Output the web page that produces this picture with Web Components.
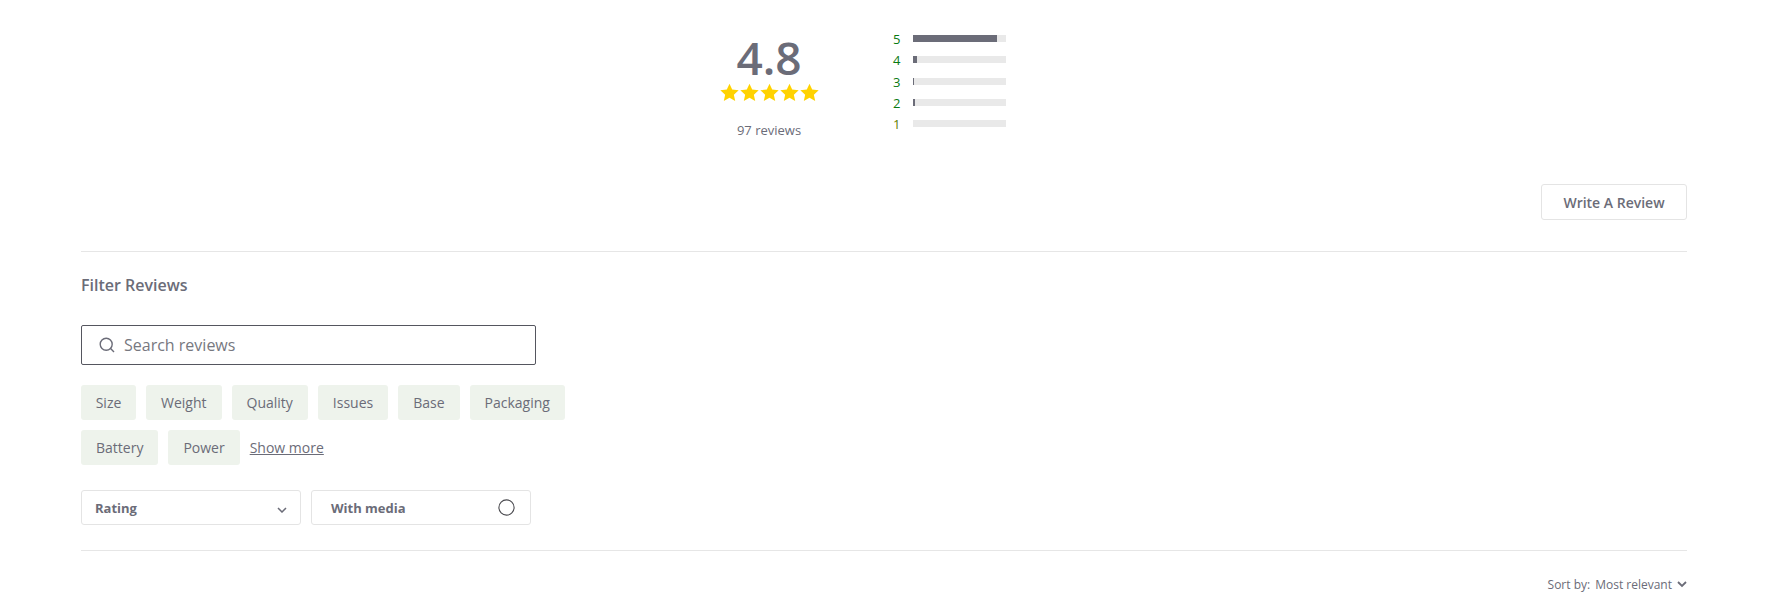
<!DOCTYPE html>
<html>
<head>
<meta charset="utf-8">
<style>
html, body { margin: 0; background: #fff; }
body { font-family: "Open Sans", sans-serif; color: #6b6c78; }
</style>
</head>
<body>
<review-panel></review-panel>

<template id="star-row-tpl">
  <style>
    :host { display: flex; gap: 1px; }
    svg { width: 19px; height: 19px; display: block; fill: #ffd200; }
  </style>
</template>

<template id="rating-bar-tpl">
  <style>
    :host { display: flex; align-items: center; height: 21.25px; font-size: 13px; font-weight: 500; }
    .n { width: 20px; color: #0a7a12; line-height: 1; position: relative; top: 1px; }
    :host([stars="1"]) .n { color: #5f7f00; }
    .track { width: 93px; height: 7px; background: #e9e9e9; }
    .fill { height: 100%; background: #6b6c78; }
  </style>
  <span class="n"></span>
  <div class="track"><div class="fill"></div></div>
</template>

<template id="chip-tpl">
  <style>
    :host { display: inline-flex; align-items: center; height: 35px; padding: 0 15px; background: #eef3ec; border-radius: 3px; font-size: 14px; color: #6b6c78; }
  </style>
  <slot></slot>
</template>

<template id="filter-box-tpl">
  <style>
    :host { display: flex; align-items: center; justify-content: space-between; box-sizing: border-box; width: 220px; height: 35px; border: 1px solid #e4e4e4; border-radius: 3px; font-size: 13px; font-weight: 700; color: #6b6c78; }
  </style>
  <slot></slot>
  <slot name="icon"></slot>
</template>

<template id="review-panel-tpl">
  <style>
    :host { display: block; padding: 0 79px 0 81px; }
    .summary { display: flex; padding: 25px 0 0 639px; height: 184px; box-sizing: border-box; }
    .score { width: 98px; display: flex; flex-direction: column; align-items: center; }
    .big { font-size: 46px; font-weight: 600; line-height: 50px; height: 50px; margin-top: 7px; color: #6b6c78; }
    .count { font-size: 13px; line-height: 18px; margin-top: 19px; }
    star-row { margin-top: 1px; }
    .bars { margin-left: 75px; margin-top: 3px; }
    .actions { display: flex; justify-content: flex-end; height: 67px; border-bottom: 1px solid #e6e6e6; }
    .write { box-sizing: border-box; width: 146px; height: 36px; border: 1px solid #e4e4e4; border-radius: 3px; background: #fff; font: 600 14px "Open Sans", sans-serif; color: #6b6c78; padding: 0; }
    h2 { font-size: 16px; font-weight: 600; margin: 0; padding-top: 22px; line-height: 22px; height: 51px; }
    .search { display: flex; align-items: center; gap: 9px; box-sizing: border-box; width: 455px; height: 40px; padding-left: 17px; border: 1px solid #55565f; border-radius: 2px; font-size: 16px; color: #77787f; }
    .chips { display: flex; flex-wrap: wrap; align-items: center; gap: 10px; width: 500px; margin-top: 20px; }
    .more { font-size: 14px; text-decoration: underline; }
    .filters { display: flex; gap: 10px; margin-top: 25px; padding-bottom: 25px; border-bottom: 1px solid #e6e6e6; }
    .rating { padding: 0 13px 0 13px; }
    .rating svg { display: block; margin-top: 5px; }
    .media { padding: 0 15px 0 19px; }
    .sort { display: flex; justify-content: flex-end; align-items: center; gap: 5px; font-size: 12px; margin-top: 25px; height: 17px; }
  </style>
  <section class="summary">
    <div class="score">
      <div class="big">4.8</div>
      <star-row></star-row>
      <div class="count">97 reviews</div>
    </div>
    <div class="bars">
      <rating-bar stars="5" pct="90.3"></rating-bar>
      <rating-bar stars="4" pct="4"></rating-bar>
      <rating-bar stars="3" pct="1"></rating-bar>
      <rating-bar stars="2" pct="2"></rating-bar>
      <rating-bar stars="1" pct="0"></rating-bar>
    </div>
  </section>
  <div class="actions"><button class="write">Write A Review</button></div>
  <h2>Filter Reviews</h2>
  <div class="search">
    <svg width="16" height="16" viewBox="0 0 16 16" fill="none" stroke="#6b6c78" stroke-width="1.4"><circle cx="7.2" cy="7.2" r="6"/><path d="M11.6 11.6L15 15"/></svg>
    <span>Search reviews</span>
  </div>
  <div class="chips">
    <filter-chip style="padding: 0 14.7px">Size</filter-chip>
    <filter-chip>Weight</filter-chip>
    <filter-chip>Quality</filter-chip>
    <filter-chip>Issues</filter-chip>
    <filter-chip>Base</filter-chip>
    <filter-chip>Packaging</filter-chip>
    <filter-chip>Battery</filter-chip>
    <filter-chip>Power</filter-chip>
    <span class="more">Show more</span>
  </div>
  <div class="filters">
    <filter-box class="rating">Rating
      <svg slot="icon" width="10" height="6" viewBox="0 0 10 6" fill="none" stroke="#6b6c78" stroke-width="1.5"><path d="M1 1l4 4 4-4"/></svg>
    </filter-box>
    <filter-box class="media">With media
      <svg slot="icon" width="17" height="17" viewBox="0 0 17 17" fill="none" stroke="#4a4a4f" stroke-width="1.1"><circle cx="8.5" cy="8.5" r="7.6"/></svg>
    </filter-box>
  </div>
  <div class="sort">
    <span>Sort by:</span><span>Most relevant</span>
    <svg width="10" height="7" viewBox="0 0 10 7" fill="none" stroke="#6b6c78" stroke-width="1.8"><path d="M1 1l4 4 4-4"/></svg>
  </div>
</template>

<script>
function mount(el, id) {
  el.attachShadow({ mode: "open" });
  el.shadowRoot.appendChild(document.getElementById(id).content.cloneNode(true));
}

class StarRow extends HTMLElement {
  constructor() {
    super();
    mount(this, "star-row-tpl");
    const star = '<svg viewBox="0 0 24 24"><path d="M12 .8l3.4 7.5 8.2.9-6.1 5.5 1.7 8.1-7.2-4.1-7.2 4.1 1.7-8.1-6.1-5.5 8.2-.9z"/></svg>';
    this.shadowRoot.appendChild(document.createRange().createContextualFragment(star.repeat(5)));
  }
}

class RatingBar extends HTMLElement {
  constructor() {
    super();
    mount(this, "rating-bar-tpl");
    this.shadowRoot.querySelector(".n").textContent = this.getAttribute("stars");
    this.shadowRoot.querySelector(".fill").style.width = this.getAttribute("pct") + "%";
  }
}

class FilterChip extends HTMLElement {
  constructor() {
    super();
    mount(this, "chip-tpl");
  }
}

class FilterBox extends HTMLElement {
  constructor() {
    super();
    mount(this, "filter-box-tpl");
  }
}

class ReviewPanel extends HTMLElement {
  constructor() {
    super();
    mount(this, "review-panel-tpl");
  }
}

customElements.define("star-row", StarRow);
customElements.define("rating-bar", RatingBar);
customElements.define("filter-chip", FilterChip);
customElements.define("filter-box", FilterBox);
customElements.define("review-panel", ReviewPanel);
</script>
</body>
</html>
